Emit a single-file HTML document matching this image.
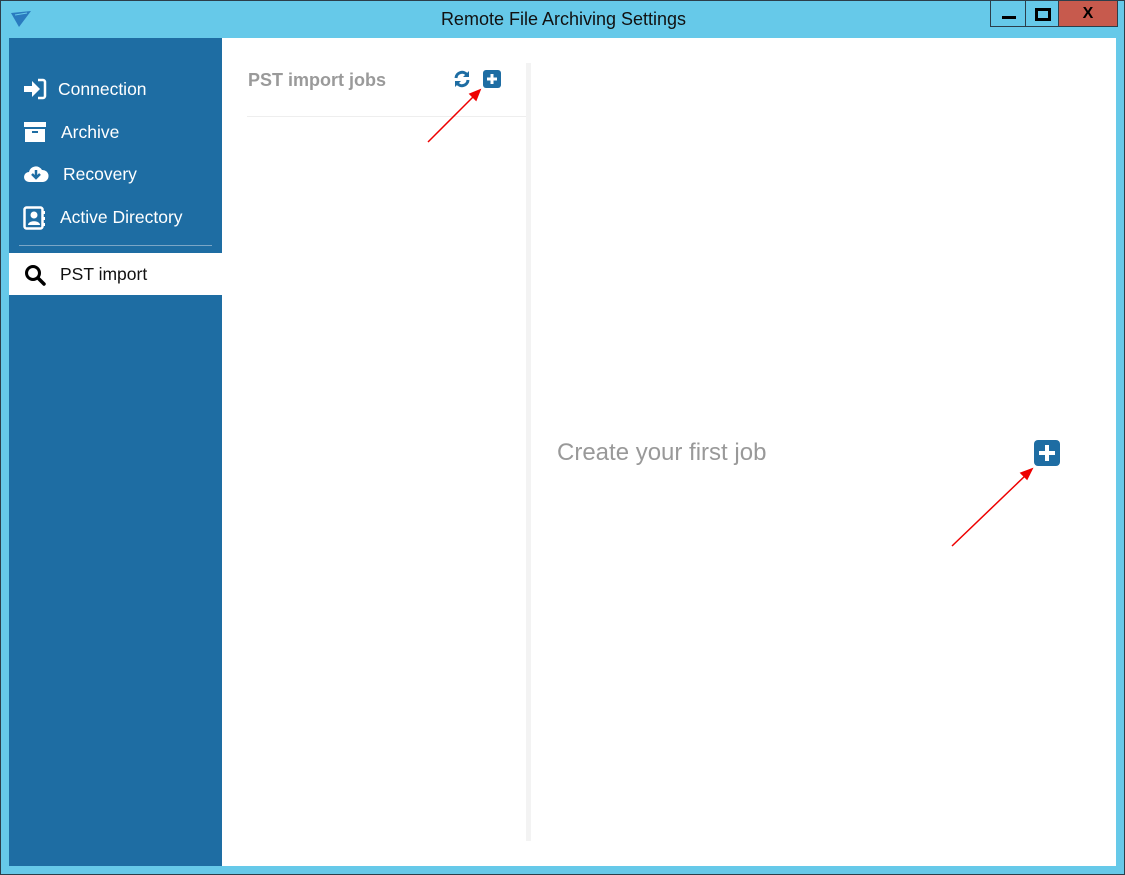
<!DOCTYPE html>
<html><head><style>
body{margin:0;width:1125px;height:875px;overflow:hidden;font-family:"Liberation Sans",sans-serif;}
.win{position:absolute;left:0;top:0;width:1125px;height:875px;box-sizing:border-box;background:#66c9e9;border:1px solid #2c3e4a;}
.title{position:absolute;left:0;top:8px;width:1125px;text-align:center;font-size:18px;color:#111;}
.btn{position:absolute;top:-1px;height:27px;border:1px solid #2c3e4a;box-sizing:border-box;}
.content{position:absolute;left:8px;top:37px;width:1107px;height:828px;background:#fff;}
.side{position:absolute;left:0;top:0;width:213px;height:828px;background:#1e6da3;}
.item{position:absolute;left:0;width:213px;height:42px;color:#fff;font-size:17.5px;}
.item span{position:absolute;top:11px;}
.item svg{position:absolute;top:10px;left:14px;}
.abs{position:absolute;}
</style></head><body>
<div class="win">
<svg class="abs" style="left:10px;top:10px" width="22" height="18" viewBox="0 0 22 18"><path d="M0 2 L20 0 L8 16 Z" fill="#2a7bbf"/><path d="M4 4 L16 2" stroke="#66c9e9" stroke-width="1"/></svg>
<div class="title">Remote File Archiving Settings</div>
<div class="btn" style="left:989px;width:36px;"><div class="abs" style="left:11px;top:15px;width:14px;height:3px;background:#000"></div></div>
<div class="btn" style="left:1024px;width:34px;"><div class="abs" style="left:9px;top:7px;width:10px;height:7px;border:3px solid #000"></div></div>
<div class="btn" style="left:1057px;width:60px;background:#c75a4d;"><div class="abs" style="left:0;width:58px;top:4px;text-align:center;font-weight:bold;font-size:16px;color:#000">X</div></div>
<div class="content">
 <div class="side">
  <div class="item" style="top:30px"><svg width="24" height="22" viewBox="0 0 24 22"><path d="M1 8h8V3l8 8-8 8v-5H1z" fill="#fff"/><path d="M15 2h5a2 2 0 0 1 2 2v14a2 2 0 0 1-2 2h-5" stroke="#fff" stroke-width="2.5" fill="none"/></svg><span style="left:49px">Connection</span></div>
  <div class="item" style="top:73px"><svg width="24" height="22" viewBox="0 0 24 22"><rect x="1" y="1" width="22" height="5" fill="#fff"/><rect x="2" y="8" width="20" height="13" fill="#fff"/><rect x="9" y="10" width="6" height="2" fill="#1e6da3"/></svg><span style="left:52px">Archive</span></div>
  <div class="item" style="top:115px"><svg width="26" height="22" viewBox="0 0 26 22"><path d="M6 19a5 5 0 0 1 0-10 7 7 0 0 1 13-2 6 6 0 0 1 1 12z" fill="#fff"/><path d="M13 7v7M9 11l4 4 4-4" stroke="#1e6da3" stroke-width="2.5" fill="none"/></svg><span style="left:54px">Recovery</span></div>
  <div class="item" style="top:158px"><svg width="24" height="24" viewBox="0 0 24 24"><rect x="1.5" y="1.5" width="18" height="21" rx="2" stroke="#fff" stroke-width="2.5" fill="none"/><circle cx="11" cy="9" r="3.5" fill="#fff"/><path d="M5 19c0-5 12-5 12 0z" fill="#fff"/><path d="M21 5v3M21 11v3M21 17v3" stroke="#fff" stroke-width="2"/></svg><span style="left:51px">Active Directory</span></div>
  <div class="abs" style="left:10px;top:207px;width:193px;height:1px;background:#7aa6c6"></div>
  <div class="item" style="top:215px;background:#fff;color:#111;"><svg width="24" height="24" viewBox="0 0 24 24"><circle cx="10" cy="10" r="6.5" stroke="#000" stroke-width="3" fill="none"/><path d="M15 15l6 6" stroke="#000" stroke-width="3.5" stroke-linecap="round"/></svg><span style="left:51px">PST import</span></div>
 </div>
 <div class="abs" style="left:239px;top:32px;font-size:18px;font-weight:bold;color:#9a9a9a">PST import jobs</div>
 <svg class="abs" style="left:444px;top:32px" width="18" height="18" viewBox="0 0 18 18"><path d="M3 8a6 6 0 0 1 11-3M15 10a6 6 0 0 1-11 3" stroke="#1e6da3" stroke-width="3" fill="none"/><path d="M16 1v6h-6zM2 17v-6h6z" fill="#1e6da3"/></svg>
 <svg class="abs" style="left:474px;top:32px" width="18" height="18" viewBox="0 0 18 18"><rect width="18" height="18" rx="3" fill="#1e6da3"/><path d="M9 4v10M4 9h10" stroke="#fff" stroke-width="3"/></svg>
 <div class="abs" style="left:238px;top:78px;width:280px;height:1px;background:#eee"></div>
 <div class="abs" style="left:517px;top:25px;width:5px;height:778px;background:#f3f3f3"></div>
 <div class="abs" style="left:548px;top:401px;font-size:24px;color:#999">Create your first job</div>
 <svg class="abs" style="left:1025px;top:402px" width="26" height="26" viewBox="0 0 26 26"><rect width="26" height="26" rx="4" fill="#1e6da3"/><path d="M13 5v16M5 13h16" stroke="#fff" stroke-width="4"/></svg>
</div>
<svg class="abs" style="left:-1px;top:-1px" width="1125" height="875"><g stroke="#e00" stroke-width="1.5" fill="#e00"><line x1="428" y1="142" x2="474" y2="96"/><path d="M480 90 L470 94 L476 100Z"/><line x1="952" y1="546" x2="1026" y2="475"/><path d="M1032 469 L1021 473 L1027 479Z"/></g></svg>
</div>
</body></html>
